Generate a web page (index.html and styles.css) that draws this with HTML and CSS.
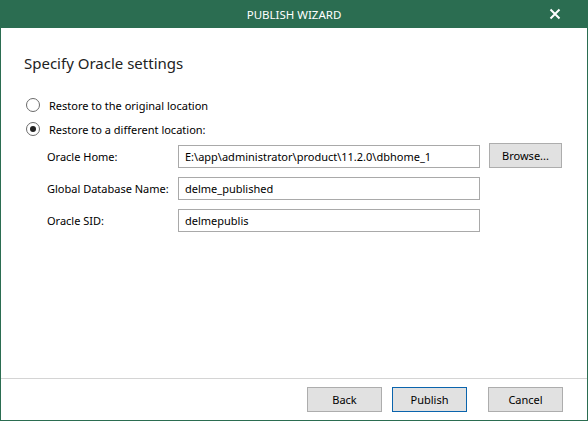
FILE: index.html
```html
<!DOCTYPE html>
<html lang="en">
<head>
    <meta charset="UTF-8">
    <title>Publish Wizard</title>
    <link rel="stylesheet" href="styles.css">
</head>
<body>
    <div class="wizard">
        <div class="titlebar">
            <span class="title">PUBLISH WIZARD</span>
            <span class="close">
                <svg width="12" height="12" viewBox="0 0 12 12">
                    <path d="M1.5 1.5 L10.5 10.5 M10.5 1.5 L1.5 10.5" stroke="#fff" stroke-width="2" fill="none"/>
                </svg>
            </span>
        </div>

        <div class="content">
            <h1>Specify Oracle settings</h1>

            <div class="options">
                <label class="option"><span class="radio"></span>Restore to the original location</label>
                <label class="option"><span class="radio checked"></span>Restore to a different location:</label>
            </div>

            <div class="form">
                <span class="label">Oracle Home:</span>
                <div class="field">E:\app\administrator\product\11.2.0\dbhome_1</div>
                <div class="btn">Browse...</div>

                <span class="label">Global Database Name:</span>
                <div class="field">delme_published</div>
                <span></span>

                <span class="label">Oracle SID:</span>
                <div class="field">delmepublis</div>
                <span></span>
            </div>
        </div>

        <div class="footer">
            <div class="btn">Back</div>
            <div class="btn primary">Publish</div>
            <div class="btn cancel">Cancel</div>
        </div>
    </div>
</body>
</html>
```

FILE: styles.css
```css
html, body {
    margin: 0;
    height: 100%;
}

body {
    font-family: 'Noto Sans', 'Open Sans', sans-serif;
    font-size: 11px;
    color: #000;
    background: #fff;
}

.wizard {
    box-sizing: border-box;
    height: 421px;
    width: 588px;
    border: 1px solid #2b6d51;
    border-top: none;
    display: flex;
    flex-direction: column;
}

.titlebar {
    height: 28px;
    margin: 0 -1px;
    background-color: #2b6d51;
    color: #fff;
    display: flex;
    align-items: center;
    justify-content: center;
    position: relative;
}

.title {
    font-size: 11.5px;
}

.close {
    position: absolute;
    right: 27px;
    top: 8px;
    width: 12px;
    height: 12px;
}

.content {
    flex: 1;
    padding: 24px 0 0 23px;
}

h1 {
    font-size: 15px;
    font-weight: normal;
    color: #222;
    margin: 0 0 22px 0;
    line-height: 22px;
}

.options {
    display: flex;
    flex-direction: column;
    gap: 6px;
}

.option {
    display: flex;
    align-items: center;
    height: 18px;
    gap: 9px;
}

.radio {
    box-sizing: border-box;
    width: 14px;
    height: 14px;
    margin-left: 2px;
    border: 1px solid #6b6b6b;
    border-radius: 50%;
    background: #fff;
    display: flex;
    align-items: center;
    justify-content: center;
}

.radio.checked::after {
    content: '';
    width: 6px;
    height: 6px;
    border-radius: 50%;
    background: #222;
}

.form {
    display: grid;
    grid-template-columns: 123px 302px 74px;
    grid-auto-rows: 23px;
    column-gap: 8px;
    row-gap: 9px;
    align-items: center;
    margin: 7px 0 0 23px;
}

.field {
    box-sizing: border-box;
    height: 23px;
    border: 1px solid #a9a9a9;
    padding: 0 6px;
    display: flex;
    align-items: center;
    white-space: nowrap;
    overflow: hidden;
}

.btn {
    box-sizing: border-box;
    height: 25px;
    width: 75px;
    background-color: #e1e1e1;
    border: 1px solid #adadad;
    display: flex;
    align-items: center;
    justify-content: center;
}

.form .btn {
    width: 73px;
    margin: -2px 0 0 1px;
}

.footer {
    height: 42px;
    border-top: 1px solid #d4d4d4;
    display: flex;
    justify-content: flex-end;
    align-items: flex-start;
    padding: 8px 24px 0 0;
    gap: 10px;
    box-sizing: border-box;
}

.btn.primary {
    border-color: #0a64ad;
}

.btn.cancel {
    margin-left: 11px;
}
```
